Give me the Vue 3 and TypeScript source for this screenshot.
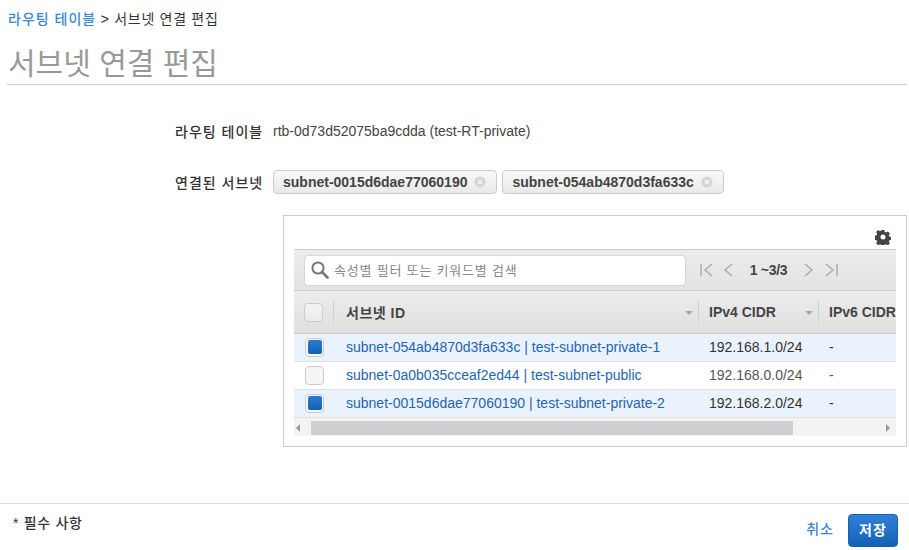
<script setup lang="ts">
const tokens = ['subnet-0015d6dae77060190', 'subnet-054ab4870d3fa633c']

const rows = [
  { id: 'subnet-054ab4870d3fa633c | test-subnet-private-1', cidr: '192.168.1.0/24', selected: true },
  { id: 'subnet-0a0b035cceaf2ed44 | test-subnet-public', cidr: '192.168.0.0/24', selected: false },
  { id: 'subnet-0015d6dae77060190 | test-subnet-private-2', cidr: '192.168.2.0/24', selected: true },
]
</script>

<template>
  <div class="page">
    <div class="crumbs"><a class="link">라우팅 테이블</a> &gt; 서브넷 연결 편집</div>
    <h1 class="title">서브넷 연결 편집</h1>

    <div class="form">
      <div class="field first">
        <div class="label">라우팅 테이블</div>
        <div class="value">rtb-0d73d52075ba9cdda (test-RT-private)</div>
      </div>
      <div class="field second">
        <div class="label">연결된 서브넷</div>
        <div class="tokens">
          <div v-for="t in tokens" :key="t" class="token">
            <span>{{ t }}</span>
            <svg class="x" width="12" height="12" viewBox="0 0 12 12">
              <circle cx="6" cy="6" r="5.5" fill="#d5d5d5" />
              <path d="M4 4l4 4M8 4l-4 4" stroke="#f7f7f7" stroke-width="1.5" />
            </svg>
          </div>
        </div>
      </div>

      <div class="panel">
        <div class="gear-row">
          <svg width="16" height="16" viewBox="0 0 16 16">
            <path fill="#444" fill-rule="evenodd" d="M6.6 1h2.8l.4 2 1.3.6 1.8-1.1 2 2-1.1 1.8.6 1.3 2 .4v2.8l-2 .4-.6 1.3 1.1 1.8-2 2-1.8-1.1-1.3.6-.4 2H6.6l-.4-2-1.3-.6-1.8 1.1-2-2 1.1-1.8-.6-1.3-2-.4V6.6l2-.4.6-1.3-1.1-1.8 2-2 1.8 1.1 1.3-.6zM8 5.5a2.5 2.5 0 1 0 0 5 2.5 2.5 0 0 0 0-5z" />
          </svg>
        </div>

        <div class="table">
          <div class="toolbar">
            <div class="search">
              <svg width="20" height="20" viewBox="0 0 20 20">
                <circle cx="8" cy="8" r="5.6" fill="none" stroke="#777" stroke-width="2" />
                <path d="M12 12l5.5 5.5" stroke="#777" stroke-width="2.8" stroke-linecap="round" />
              </svg>
              <span class="placeholder">속성별 필터 또는 키워드별 검색</span>
            </div>
            <div class="pager">
              <svg width="13" height="14" viewBox="0 0 13 14"><path d="M1 1v12M12 1L5 7l7 6" fill="none" stroke="#aaa" stroke-width="1.4" /></svg>
              <svg class="prev" width="10" height="14" viewBox="0 0 10 14"><path d="M9 1L2 7l7 6" fill="none" stroke="#aaa" stroke-width="1.4" /></svg>
              <span class="count">1 ~3/3</span>
              <svg class="next" width="10" height="14" viewBox="0 0 10 14"><path d="M1 1l7 6-7 6" fill="none" stroke="#aaa" stroke-width="1.4" /></svg>
              <svg width="13" height="14" viewBox="0 0 13 14"><path d="M12 1v12M1 1l7 6-7 6" fill="none" stroke="#aaa" stroke-width="1.4" /></svg>
            </div>
          </div>

          <div class="grid header">
            <div class="cell check"><span class="box"></span></div>
            <div class="cell th id"><span class="ko">서브넷 ID</span><i class="caret"></i></div>
            <div class="cell th cidr4">IPv4 CIDR<i class="caret"></i></div>
            <div class="cell th cidr6">IPv6 CIDR</div>
          </div>

          <div v-for="r in rows" :key="r.id" class="grid row" :class="{ selected: r.selected }">
            <div class="cell check">
              <span class="box"><span v-if="r.selected" class="fill"></span></span>
            </div>
            <div class="cell id link-cell">{{ r.id }}</div>
            <div class="cell cidr4 plain">{{ r.cidr }}</div>
            <div class="cell cidr6 plain">-</div>
          </div>

          <div class="scrollbar">
            <i class="arrow left"></i>
            <div class="thumb"></div>
            <i class="arrow right"></i>
          </div>
        </div>
      </div>
    </div>

    <div class="footer">
      <div class="required">* 필수 사항</div>
      <div class="actions">
        <a class="link cancel">취소</a>
        <button class="save">저장</button>
      </div>
    </div>
  </div>
</template>

<style>
html, body {
  margin: 0;
  background: #fff;
  overflow: hidden;
}
</style>

<style scoped>
* {
  box-sizing: border-box;
}

.page {
  height: 550px;
  width: 909px;
  display: flex;
  flex-direction: column;
  font-family: "Liberation Sans", "Noto Sans CJK KR", sans-serif;
  font-size: 14px;
  color: #444;
}

.crumbs {
  height: 20px;
  margin: 9px 0 0 8px;
  line-height: 20px;
  font-size: 14px;
  letter-spacing: .7px;
  color: #333;
}

.link {
  color: #3a87d8;
}

.crumbs .link {
  font-weight: 500;
  letter-spacing: 1px;
}

.title {
  margin: 15px 2px 0 7px;
  height: 41px;
  padding-left: 1px;
  border-bottom: 1px solid #ccc;
  font-size: 30px;
  line-height: 40px;
  font-weight: 400;
  color: #999;
}

.form {
  flex: 1;
  padding-left: 175px;
}

.field {
  display: flex;
  align-items: center;
}

.first {
  margin-top: 36px;
  height: 20px;
}

.second {
  margin-top: 29px;
  height: 24px;
}

.label {
  width: 98px;
  font-size: 14px;
  font-weight: 500;
  letter-spacing: 1px;
  color: #333;
}

.value {
  color: #444;
}

.tokens {
  display: flex;
  gap: 5px;
}

.token {
  height: 24px;
  display: flex;
  align-items: center;
  padding: 0 10px 0 9px;
  border: 1px solid #ccc;
  border-radius: 4px;
  background: linear-gradient(#f9f9f9, #e9e9e9);
  font-weight: 700;
  font-size: 14px;
  color: #444;
}

.x {
  margin-left: 7px;
}

.panel {
  width: 624px;
  height: 232px;
  margin: 21px 0 0 108px;
  padding: 0 10px 0 10px;
  border: 1px solid #ccc;
}

.gear-row {
  height: 33px;
  display: flex;
  justify-content: flex-end;
  align-items: flex-end;
  padding: 0 5px 4px 0;
}

.table {
  width: 602px;
  overflow: hidden;
}

.toolbar {
  height: 42px;
  display: flex;
  align-items: center;
  padding-left: 10px;
  border-top: 1px solid #ccc;
  border-bottom: 1px solid #ccc;
  background: linear-gradient(#ececec, #e3e3e3);
}

.search {
  width: 382px;
  height: 31px;
  display: flex;
  align-items: center;
  padding-left: 5px;
  background: #fff;
  border: 1px solid #d6d6d6;
  border-radius: 4px;
}

.placeholder {
  margin: 0 0 2px 4px;
  font-size: 13px;
  letter-spacing: .8px;
  color: #888;
}

.pager {
  display: flex;
  align-items: center;
  margin-left: 14px;
}

.prev {
  margin-left: 10px;
}

.next {
  margin-right: 11px;
}

.count {
  width: 71px;
  text-align: center;
  font-size: 14px;
  font-weight: 700;
  letter-spacing: -.3px;
  color: #444;
}

.grid {
  display: grid;
  grid-template-columns: 39px 365px 120px 78px;
}

.header {
  height: 43px;
  background: linear-gradient(#ededed, #dfdfdf);
  border-bottom: 1px solid #ccc;
}

.row {
  height: 28px;
  border-bottom: 1px solid #e1e1e1;
  background: #fff;
}

.row.selected {
  background: #eaf2fd;
}

.cell {
  display: flex;
  align-items: center;
  white-space: nowrap;
  overflow: hidden;
}

.row .cell {
  padding-bottom: 1px;
}

.check {
  padding-left: 10px;
}

.row .check {
  padding-left: 11px;
}

.box {
  width: 19px;
  height: 19px;
  display: flex;
  align-items: center;
  justify-content: center;
  border: 1px solid #ccc;
  border-radius: 4px;
  background: #f5f5f5;
}

.header .box {
  background: linear-gradient(#f3f3f3, #ebebeb);
}

.fill {
  width: 14px;
  height: 14px;
  border-radius: 2px;
  background: linear-gradient(#2a7bd4, #1262b3);
}

.th {
  position: relative;
  height: 22px;
  margin-top: 10px;
  padding-left: 10px;
  border-left: 1px solid #d0d0d0;
  font-weight: 700;
  font-size: 14px;
  color: #444;
}

.th.id {
  padding-left: 12px;
}

.ko {
  letter-spacing: .5px;
}

.caret {
  position: absolute;
  right: 5px;
  top: 10px;
  width: 0;
  height: 0;
  border: 4px solid transparent;
  border-top: 4px solid #aaa;
  border-bottom: 0;
}

.row .link-cell {
  padding-left: 13px;
  color: #1f65b0;
}

.plain {
  padding-left: 11px;
  color: #333;
}

.row:not(.selected) .plain {
  color: #555;
}

.scrollbar {
  position: relative;
  height: 18px;
  display: flex;
  align-items: center;
  padding-top: 1px;
  background: #f3f3f3;
}

.thumb {
  width: 482px;
  height: 14px;
  margin-left: 17px;
  background: #cfcfcf;
}

.arrow {
  position: absolute;
  top: 6px;
  width: 0;
  height: 0;
  border: 4px solid transparent;
}

.arrow.left {
  left: 2px;
  border-right: 4px solid #999;
  border-left: 0;
}

.arrow.right {
  right: 6px;
  border-left: 4px solid #999;
  border-right: 0;
}

.footer {
  height: 47px;
  display: flex;
  justify-content: space-between;
  border-top: 1px solid #ddd;
}

.required {
  margin: 8px 0 0 13px;
  font-size: 14px;
  font-weight: 500;
  letter-spacing: .7px;
  color: #333;
}

.actions {
  display: flex;
  align-items: flex-start;
  padding: 10px 11px 0 0;
}

.cancel {
  margin: 4px 14px 0 0;
  font-weight: 500;
  letter-spacing: 1px;
}

.save {
  width: 50px;
  height: 33px;
  padding: 0 0 4px;
  border: 1px solid #1a5fa8;
  border-radius: 4px;
  background: linear-gradient(#2f80d8, #1462b4);
  color: #fff;
  font-family: inherit;
  font-size: 14px;
  font-weight: 700;
  letter-spacing: 1px;
}
</style>
